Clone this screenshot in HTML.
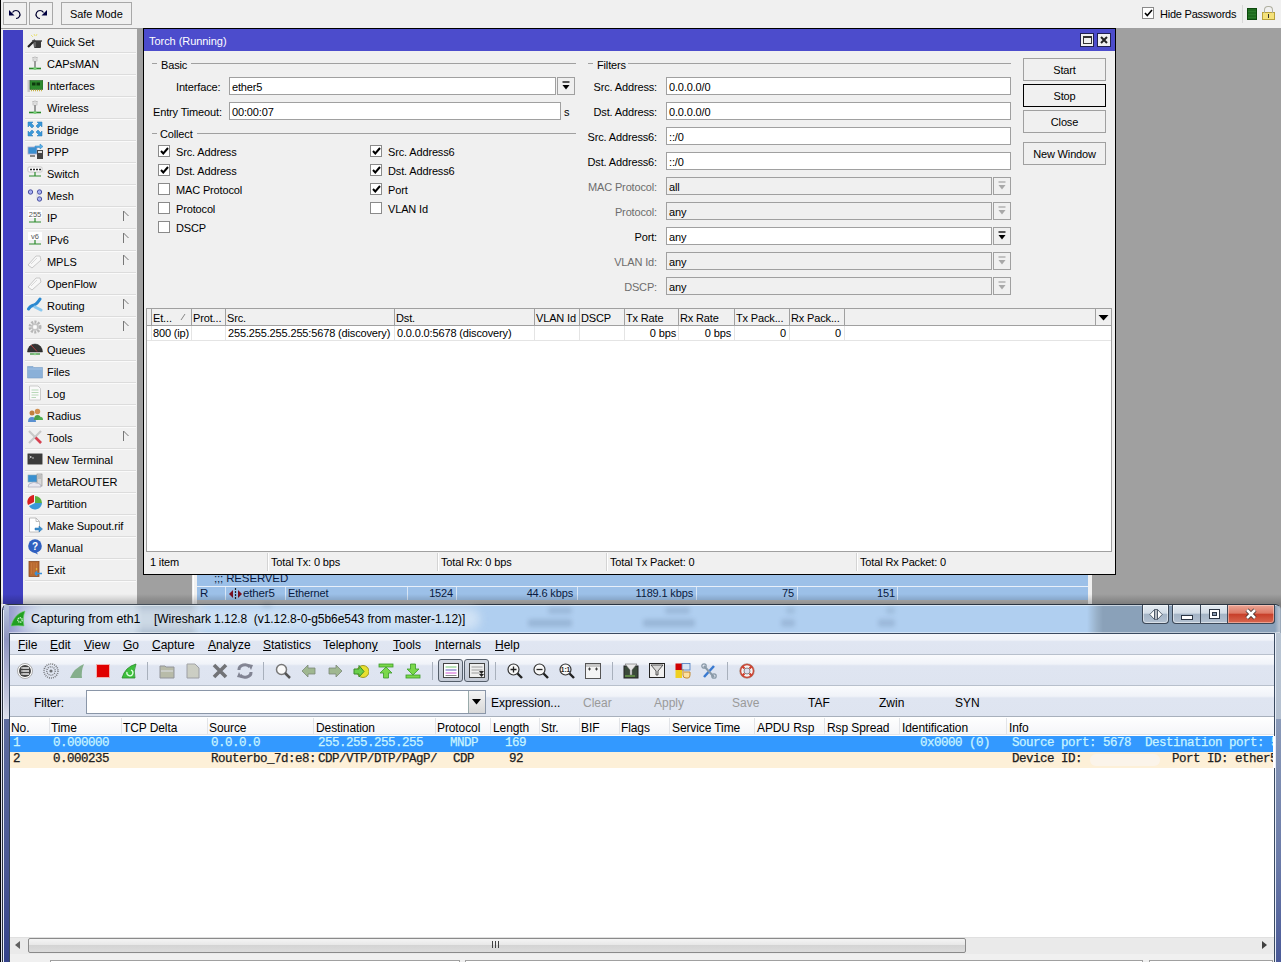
<!DOCTYPE html><html><head><meta charset="utf-8"><style>
*{margin:0;padding:0;box-sizing:border-box}
html,body{width:1281px;height:962px;overflow:hidden}
body{position:relative;background:#f0f0f0;font-family:"Liberation Sans",sans-serif;font-size:11px;color:#000}
.t{position:absolute;white-space:nowrap;line-height:13px;letter-spacing:-0.15px}
.m{font-family:"Liberation Mono",monospace}
div{position:absolute}
</style></head><body>
<div style="position:absolute;left:0px;top:0px;width:1px;height:962px;background:#000"></div>
<div style="position:absolute;left:3px;top:2px;width:24px;height:23px;background:#f0f0f0;border:1px solid #a8a8a8"></div>
<div style="position:absolute;left:29px;top:2px;width:24px;height:23px;background:#f0f0f0;border:1px solid #a8a8a8"></div>
<div style="position:absolute;left:61px;top:2px;width:71px;height:23px;background:#f0f0f0;border:1px solid #a8a8a8"></div>
<svg style="position:absolute;left:8px;top:8px" width="14" height="12" viewBox="0 0 14 12"><path d="M4.5 4.5 A4 4 0 1 1 8 10.5" fill="none" stroke="#000030" stroke-width="1.2"/><path d="M1 2 L1 7.5 L6.5 7.5 Z" fill="#000040"/></svg>
<svg style="position:absolute;left:34px;top:8px" width="14" height="12" viewBox="0 0 14 12"><path d="M9.5 4.5 A4 4 0 1 0 6 10.5" fill="none" stroke="#000030" stroke-width="1.2"/><path d="M13 2 L13 7.5 L7.5 7.5 Z" fill="#000040"/></svg>
<div class="t" style="left:70px;top:8px;font-size:11px;letter-spacing:-0.05px">Safe Mode</div>
<div style="position:absolute;left:1142px;top:7px;width:12px;height:12px;background:#fff;border:1px solid #8a8a8a"></div>
<svg style="position:absolute;left:1144px;top:9px" width="9" height="8" viewBox="0 0 9 8"><path d="M1 4 L3.3 6.5 L8 1" fill="none" stroke="#000" stroke-width="1.6"/></svg>
<div class="t" style="left:1160px;top:8px;font-size:11px;letter-spacing:-0.23px">Hide Passwords</div>
<div style="position:absolute;left:1242px;top:5px;width:1px;height:18px;background:#d8d8d8"></div>
<div style="position:absolute;left:1247px;top:8px;width:10px;height:12px;background:repeating-linear-gradient(#1f6b1f 0 2px,#2a7a2a 2px 3px);border:1px solid #0d4a0d"></div>
<div style="position:absolute;left:1262px;top:12px;width:13px;height:8px;background:#f5e27a;border:1px solid #b9a23a"></div>
<div style="position:absolute;left:1268px;top:14px;width:1px;height:4px;background:#333"></div>
<div style="position:absolute;left:1264px;top:6px;width:9px;height:7px;border:1.5px solid #b0b0a0;border-bottom:none;border-radius:4px 4px 0 0"></div>
<div style="position:absolute;left:1px;top:28px;width:1280px;height:1px;background:#a0a0a0"></div>
<div style="position:absolute;left:1px;top:29px;width:2px;height:575px;background:#f0f0f0"></div>
<div style="position:absolute;left:3px;top:30px;width:20px;height:574px;background:#4140c2"></div>
<div style="position:absolute;left:23px;top:29px;width:114px;height:575px;background:#f0f0f0"></div>
<div class="t" style="left:47px;top:36px;font-size:11px;letter-spacing:-0.05px">Quick Set</div>
<div style="position:absolute;left:25px;top:52px;width:111px;height:1px;background:#dcdcdc"></div>
<div style="position:absolute;left:25px;top:53px;width:111px;height:1px;background:#fafafa"></div>
<div class="t" style="left:47px;top:58px;font-size:11px;letter-spacing:-0.05px">CAPsMAN</div>
<div style="position:absolute;left:25px;top:74px;width:111px;height:1px;background:#dcdcdc"></div>
<div style="position:absolute;left:25px;top:75px;width:111px;height:1px;background:#fafafa"></div>
<div class="t" style="left:47px;top:80px;font-size:11px;letter-spacing:-0.05px">Interfaces</div>
<div style="position:absolute;left:25px;top:96px;width:111px;height:1px;background:#dcdcdc"></div>
<div style="position:absolute;left:25px;top:97px;width:111px;height:1px;background:#fafafa"></div>
<div class="t" style="left:47px;top:102px;font-size:11px;letter-spacing:-0.05px">Wireless</div>
<div style="position:absolute;left:25px;top:118px;width:111px;height:1px;background:#dcdcdc"></div>
<div style="position:absolute;left:25px;top:119px;width:111px;height:1px;background:#fafafa"></div>
<div class="t" style="left:47px;top:124px;font-size:11px;letter-spacing:-0.05px">Bridge</div>
<div style="position:absolute;left:25px;top:140px;width:111px;height:1px;background:#dcdcdc"></div>
<div style="position:absolute;left:25px;top:141px;width:111px;height:1px;background:#fafafa"></div>
<div class="t" style="left:47px;top:146px;font-size:11px;letter-spacing:-0.05px">PPP</div>
<div style="position:absolute;left:25px;top:162px;width:111px;height:1px;background:#dcdcdc"></div>
<div style="position:absolute;left:25px;top:163px;width:111px;height:1px;background:#fafafa"></div>
<div class="t" style="left:47px;top:168px;font-size:11px;letter-spacing:-0.05px">Switch</div>
<div style="position:absolute;left:25px;top:184px;width:111px;height:1px;background:#dcdcdc"></div>
<div style="position:absolute;left:25px;top:185px;width:111px;height:1px;background:#fafafa"></div>
<div class="t" style="left:47px;top:190px;font-size:11px;letter-spacing:-0.05px">Mesh</div>
<div style="position:absolute;left:25px;top:206px;width:111px;height:1px;background:#dcdcdc"></div>
<div style="position:absolute;left:25px;top:207px;width:111px;height:1px;background:#fafafa"></div>
<div class="t" style="left:47px;top:212px;font-size:11px;letter-spacing:-0.05px">IP</div>
<div style="position:absolute;left:25px;top:228px;width:111px;height:1px;background:#dcdcdc"></div>
<div style="position:absolute;left:25px;top:229px;width:111px;height:1px;background:#fafafa"></div>
<svg style="position:absolute;left:122px;top:210px" width="8" height="12" viewBox="0 0 8 12"><path d="M1.5 1 L1.5 11 M1.5 1 L6.5 6" fill="none" stroke="#777" stroke-width="1"/></svg>
<div class="t" style="left:47px;top:234px;font-size:11px;letter-spacing:-0.05px">IPv6</div>
<div style="position:absolute;left:25px;top:250px;width:111px;height:1px;background:#dcdcdc"></div>
<div style="position:absolute;left:25px;top:251px;width:111px;height:1px;background:#fafafa"></div>
<svg style="position:absolute;left:122px;top:232px" width="8" height="12" viewBox="0 0 8 12"><path d="M1.5 1 L1.5 11 M1.5 1 L6.5 6" fill="none" stroke="#777" stroke-width="1"/></svg>
<div class="t" style="left:47px;top:256px;font-size:11px;letter-spacing:-0.05px">MPLS</div>
<div style="position:absolute;left:25px;top:272px;width:111px;height:1px;background:#dcdcdc"></div>
<div style="position:absolute;left:25px;top:273px;width:111px;height:1px;background:#fafafa"></div>
<svg style="position:absolute;left:122px;top:254px" width="8" height="12" viewBox="0 0 8 12"><path d="M1.5 1 L1.5 11 M1.5 1 L6.5 6" fill="none" stroke="#777" stroke-width="1"/></svg>
<div class="t" style="left:47px;top:278px;font-size:11px;letter-spacing:-0.05px">OpenFlow</div>
<div style="position:absolute;left:25px;top:294px;width:111px;height:1px;background:#dcdcdc"></div>
<div style="position:absolute;left:25px;top:295px;width:111px;height:1px;background:#fafafa"></div>
<div class="t" style="left:47px;top:300px;font-size:11px;letter-spacing:-0.05px">Routing</div>
<div style="position:absolute;left:25px;top:316px;width:111px;height:1px;background:#dcdcdc"></div>
<div style="position:absolute;left:25px;top:317px;width:111px;height:1px;background:#fafafa"></div>
<svg style="position:absolute;left:122px;top:298px" width="8" height="12" viewBox="0 0 8 12"><path d="M1.5 1 L1.5 11 M1.5 1 L6.5 6" fill="none" stroke="#777" stroke-width="1"/></svg>
<div class="t" style="left:47px;top:322px;font-size:11px;letter-spacing:-0.05px">System</div>
<div style="position:absolute;left:25px;top:338px;width:111px;height:1px;background:#dcdcdc"></div>
<div style="position:absolute;left:25px;top:339px;width:111px;height:1px;background:#fafafa"></div>
<svg style="position:absolute;left:122px;top:320px" width="8" height="12" viewBox="0 0 8 12"><path d="M1.5 1 L1.5 11 M1.5 1 L6.5 6" fill="none" stroke="#777" stroke-width="1"/></svg>
<div class="t" style="left:47px;top:344px;font-size:11px;letter-spacing:-0.05px">Queues</div>
<div style="position:absolute;left:25px;top:360px;width:111px;height:1px;background:#dcdcdc"></div>
<div style="position:absolute;left:25px;top:361px;width:111px;height:1px;background:#fafafa"></div>
<div class="t" style="left:47px;top:366px;font-size:11px;letter-spacing:-0.05px">Files</div>
<div style="position:absolute;left:25px;top:382px;width:111px;height:1px;background:#dcdcdc"></div>
<div style="position:absolute;left:25px;top:383px;width:111px;height:1px;background:#fafafa"></div>
<div class="t" style="left:47px;top:388px;font-size:11px;letter-spacing:-0.05px">Log</div>
<div style="position:absolute;left:25px;top:404px;width:111px;height:1px;background:#dcdcdc"></div>
<div style="position:absolute;left:25px;top:405px;width:111px;height:1px;background:#fafafa"></div>
<div class="t" style="left:47px;top:410px;font-size:11px;letter-spacing:-0.05px">Radius</div>
<div style="position:absolute;left:25px;top:426px;width:111px;height:1px;background:#dcdcdc"></div>
<div style="position:absolute;left:25px;top:427px;width:111px;height:1px;background:#fafafa"></div>
<div class="t" style="left:47px;top:432px;font-size:11px;letter-spacing:-0.05px">Tools</div>
<div style="position:absolute;left:25px;top:448px;width:111px;height:1px;background:#dcdcdc"></div>
<div style="position:absolute;left:25px;top:449px;width:111px;height:1px;background:#fafafa"></div>
<svg style="position:absolute;left:122px;top:430px" width="8" height="12" viewBox="0 0 8 12"><path d="M1.5 1 L1.5 11 M1.5 1 L6.5 6" fill="none" stroke="#777" stroke-width="1"/></svg>
<div class="t" style="left:47px;top:454px;font-size:11px;letter-spacing:-0.05px">New Terminal</div>
<div style="position:absolute;left:25px;top:470px;width:111px;height:1px;background:#dcdcdc"></div>
<div style="position:absolute;left:25px;top:471px;width:111px;height:1px;background:#fafafa"></div>
<div class="t" style="left:47px;top:476px;font-size:11px;letter-spacing:-0.05px">MetaROUTER</div>
<div style="position:absolute;left:25px;top:492px;width:111px;height:1px;background:#dcdcdc"></div>
<div style="position:absolute;left:25px;top:493px;width:111px;height:1px;background:#fafafa"></div>
<div class="t" style="left:47px;top:498px;font-size:11px;letter-spacing:-0.05px">Partition</div>
<div style="position:absolute;left:25px;top:514px;width:111px;height:1px;background:#dcdcdc"></div>
<div style="position:absolute;left:25px;top:515px;width:111px;height:1px;background:#fafafa"></div>
<div class="t" style="left:47px;top:520px;font-size:11px;letter-spacing:-0.05px">Make Supout.rif</div>
<div style="position:absolute;left:25px;top:536px;width:111px;height:1px;background:#dcdcdc"></div>
<div style="position:absolute;left:25px;top:537px;width:111px;height:1px;background:#fafafa"></div>
<div class="t" style="left:47px;top:542px;font-size:11px;letter-spacing:-0.05px">Manual</div>
<div style="position:absolute;left:25px;top:558px;width:111px;height:1px;background:#dcdcdc"></div>
<div style="position:absolute;left:25px;top:559px;width:111px;height:1px;background:#fafafa"></div>
<div class="t" style="left:47px;top:564px;font-size:11px;letter-spacing:-0.05px">Exit</div>
<div style="position:absolute;left:25px;top:580px;width:111px;height:1px;background:#dcdcdc"></div>
<div style="position:absolute;left:25px;top:581px;width:111px;height:1px;background:#fafafa"></div>
<svg style="position:absolute;left:27px;top:33px" width="16" height="16" viewBox="0 0 16 16"><path d="M7 1 L8 3 M4 2 L6 4 M10 1 L9 3" stroke="#e8e070" stroke-width="0.9"/><path d="M1 14 L8 7" stroke="#222" stroke-width="2.2"/><path d="M5 8 H15" stroke="#555" stroke-width="1.6"/><path d="M6 8 L7 14 Q7 15 8 15 H13 Q14 15 14 14 L14 8 Z" fill="#3a3a3a"/><path d="M8 9 V14" stroke="#888" stroke-width="1"/></svg>
<svg style="position:absolute;left:27px;top:55px" width="16" height="16" viewBox="0 0 16 16"><path d="M5 3 Q8 1 11 3" fill="none" stroke="#bbb" stroke-width="1"/><rect x="6" y="4" width="4" height="2" fill="#f4f4f4" stroke="#aaa" stroke-width="0.6"/><path d="M8 6 L8 13" stroke="#9a9a9a" stroke-width="2"/><path d="M2 13.5 L14 13.5" stroke="#2a8a2a" stroke-width="1.6"/><circle cx="8" cy="13.5" r="1.5" fill="#7ad07a"/></svg>
<svg style="position:absolute;left:27px;top:99px" width="16" height="16" viewBox="0 0 16 16"><path d="M5 3 Q8 1 11 3" fill="none" stroke="#bbb" stroke-width="1"/><rect x="6" y="4" width="4" height="2" fill="#f4f4f4" stroke="#aaa" stroke-width="0.6"/><path d="M8 6 L8 13" stroke="#9a9a9a" stroke-width="2"/><path d="M2 13.5 L14 13.5" stroke="#2a8a2a" stroke-width="1.6"/><circle cx="8" cy="13.5" r="1.5" fill="#7ad07a"/></svg>
<svg style="position:absolute;left:27px;top:77px" width="16" height="16" viewBox="0 0 16 16"><rect x="0.5" y="3" width="2.5" height="12" fill="#c8c8c8"/><rect x="3" y="3.5" width="13" height="9" fill="#2e8a2e" stroke="#1e5a1e" stroke-width="0.6"/><rect x="5" y="5.5" width="3.5" height="3" fill="#0e3a0e"/><rect x="9.5" y="5.5" width="3.5" height="3" fill="#0e3a0e"/><path d="M4 13.5 H15" stroke="#c8b040" stroke-width="1.4" stroke-dasharray="1 1"/></svg>
<svg style="position:absolute;left:27px;top:121px" width="16" height="16" viewBox="0 0 16 16"><g transform=""><path d="M1 1 H6 L4.5 2.5 L7 5 L5 7 L2.5 4.5 L1 6 Z" fill="#3a98d8" stroke="#2a78b8" stroke-width="0.5"/></g><g transform="translate(16,0) scale(-1,1)"><path d="M1 1 H6 L4.5 2.5 L7 5 L5 7 L2.5 4.5 L1 6 Z" fill="#3a98d8" stroke="#2a78b8" stroke-width="0.5"/></g><g transform="translate(0,16) scale(1,-1)"><path d="M1 1 H6 L4.5 2.5 L7 5 L5 7 L2.5 4.5 L1 6 Z" fill="#3a98d8" stroke="#2a78b8" stroke-width="0.5"/></g><g transform="translate(16,16) scale(-1,-1)"><path d="M1 1 H6 L4.5 2.5 L7 5 L5 7 L2.5 4.5 L1 6 Z" fill="#3a98d8" stroke="#2a78b8" stroke-width="0.5"/></g></svg>
<svg style="position:absolute;left:27px;top:143px" width="16" height="16" viewBox="0 0 16 16"><rect x="1" y="4" width="9" height="7" fill="#3a90d0" stroke="#aac" stroke-width="0.8"/><rect x="3" y="12" width="5" height="2" fill="#888"/><rect x="10" y="7" width="6" height="9" fill="#444"/><rect x="11" y="8" width="4" height="2" fill="#ddd"/><path d="M8 3 H13 V1 L16 3.5 L13 6 V4.5 H8Z" fill="#5ab0e8" stroke="#2a80c0" stroke-width="0.5"/></svg>
<svg style="position:absolute;left:27px;top:165px" width="16" height="16" viewBox="0 0 16 16"><rect x="1" y="2" width="14" height="5" rx="1" fill="#fff" stroke="#bbb" stroke-width="0.8"/><path d="M3 4.5 H5 M6 4.5 H8 M9 4.5 H11 M12 4.5 H14" stroke="#222" stroke-width="1.5"/><path d="M8 7 V11 M2 11 H14" stroke="#2a8a2a" stroke-width="1.2"/></svg>
<svg style="position:absolute;left:27px;top:187px" width="16" height="16" viewBox="0 0 16 16"><circle cx="3.5" cy="5" r="2.2" fill="#a8b0f0" stroke="#4a50a0" stroke-width="1"/><circle cx="12.5" cy="5" r="2.2" fill="#a8b0f0" stroke="#4a50a0" stroke-width="1"/><circle cx="12.5" cy="12" r="2.2" fill="#a8b0f0" stroke="#4a50a0" stroke-width="1"/><path d="M10 5 V12" stroke="#ccc" stroke-width="0.6"/></svg>
<svg style="position:absolute;left:27px;top:209px" width="16" height="16" viewBox="0 0 16 16"><rect x="1" y="1" width="14" height="8" fill="#fff"/><text x="8" y="8" font-size="7.5" text-anchor="middle" fill="#555" font-family="Liberation Sans">255</text><path d="M8 9 L8 13 M2 13 L14 13" stroke="#2a8a2a" stroke-width="1.2"/></svg>
<svg style="position:absolute;left:27px;top:231px" width="16" height="16" viewBox="0 0 16 16"><rect x="1" y="1" width="14" height="8" fill="#fff"/><text x="8" y="8" font-size="7.5" text-anchor="middle" fill="#555" font-family="Liberation Sans">v6</text><path d="M8 9 L8 13 M2 13 L14 13" stroke="#2a8a2a" stroke-width="1.2"/></svg>
<svg style="position:absolute;left:27px;top:253px" width="16" height="16" viewBox="0 0 16 16"><path d="M1 12 L9 3 L13 3 L14 7 L5 15 Z" fill="#f8f8f8" stroke="#c8c8c8" stroke-width="1"/><path d="M4 11 L10 5" stroke="#d8d8d8"/></svg>
<svg style="position:absolute;left:27px;top:275px" width="16" height="16" viewBox="0 0 16 16"><path d="M1 12 L9 3 L13 3 L14 7 L5 15 Z" fill="#f8f8f8" stroke="#c8c8c8" stroke-width="1"/><path d="M4 11 L10 5" stroke="#d8d8d8"/></svg>
<svg style="position:absolute;left:27px;top:297px" width="16" height="16" viewBox="0 0 16 16"><path d="M1.5 12 Q3 9 7 8 Q10 7 13 2" stroke="#2a88d0" stroke-width="3" fill="none" stroke-linecap="round"/><path d="M8 10 L14 13" stroke="#8ac8f0" stroke-width="3" stroke-linecap="round"/></svg>
<svg style="position:absolute;left:27px;top:319px" width="16" height="16" viewBox="0 0 16 16"><g opacity="0.8"><circle cx="8" cy="8" r="5" fill="none" stroke="#a8a8a8" stroke-width="3" stroke-dasharray="2 1.2"/><circle cx="8" cy="8" r="3" fill="none" stroke="#b8b8b8" stroke-width="1.5"/><circle cx="8" cy="8" r="1.3" fill="#fff"/></g></svg>
<svg style="position:absolute;left:27px;top:341px" width="16" height="16" viewBox="0 0 16 16"><path d="M0.5 11 A7.5 8 0 0 1 15.5 11 Z" fill="#333" stroke="#222" stroke-width="0.5"/><path d="M4 4 L10 10.5" stroke="#c04040" stroke-width="0.9"/><path d="M3 13 H13" stroke="#2a8a2a" stroke-width="1.2"/><circle cx="8" cy="13" r="1.3" fill="#8ad08a"/></svg>
<svg style="position:absolute;left:27px;top:363px" width="16" height="16" viewBox="0 0 16 16"><path d="M0.5 3.5 H6 L7 4.5 H15.5 V15 H0.5 Z" fill="#8ab0d8" stroke="#7aa0c8" stroke-width="0.6"/><path d="M0.5 6 H15.5" stroke="#a8c8e8" stroke-width="0.8"/></svg>
<svg style="position:absolute;left:27px;top:385px" width="16" height="16" viewBox="0 0 16 16"><path d="M2.5 1 H11 L13.5 3.5 V15 H2.5 Z" fill="#fafafa" stroke="#c0c0c0" stroke-width="0.8"/><path d="M4.5 5 H11.5 M4.5 7.5 H11.5 M4.5 10 H11.5 M4.5 12.5 H9" stroke="#b8d8b8" stroke-width="1"/></svg>
<svg style="position:absolute;left:27px;top:407px" width="16" height="16" viewBox="0 0 16 16"><circle cx="5" cy="6" r="2.5" fill="#c08040"/><circle cx="10.5" cy="4.5" r="2.7" fill="#d09050"/><path d="M1 15 Q1 10 5 10 Q9 10 9 15Z" fill="#5a90d0"/><path d="M7 13 Q7 8 10.5 8 Q14 8 14 13Z" fill="#4aa04a"/><path d="M11 13 Q11 10 14 10 Q16 10 16 13Z" fill="#50b050"/></svg>
<svg style="position:absolute;left:27px;top:429px" width="16" height="16" viewBox="0 0 16 16"><path d="M2 2 L14 14" stroke="#c8c8c8" stroke-width="2.2"/><path d="M14 2 L2 14" stroke="#c8c8c8" stroke-width="2.2"/><path d="M8.5 8.5 L14 14" stroke="#d84050" stroke-width="2.6"/></svg>
<svg style="position:absolute;left:27px;top:451px" width="16" height="16" viewBox="0 0 16 16"><rect x="0.5" y="2.5" width="15" height="11" rx="1" fill="#3a3a3a" stroke="#999" stroke-width="1"/><path d="M2.5 5 L4.5 6 L2.5 7" stroke="#ddd" stroke-width="0.8" fill="none"/><path d="M5 7 H7" stroke="#ddd" stroke-width="0.8"/></svg>
<svg style="position:absolute;left:27px;top:473px" width="16" height="16" viewBox="0 0 16 16"><rect x="1" y="2" width="9" height="7" fill="#3a90d0" stroke="#8ab" stroke-width="0.6"/><rect x="10" y="1" width="5" height="12" fill="#d8d8d8" stroke="#888" stroke-width="0.6"/><path d="M11 3 H14 M11 5 H14" stroke="#888" stroke-width="0.6"/><path d="M1 14 Q1 10 5 10 Q7 8 9 10 Q14 10 14 14Z" fill="#e8e8f0" stroke="#9a9ab0" stroke-width="0.6"/></svg>
<svg style="position:absolute;left:27px;top:495px" width="16" height="16" viewBox="0 0 16 16"><path d="M8 8 L8 1 A7 7 0 0 1 15 8 Z" fill="#5ab040"/><path d="M8 8 L15 8 A7 7 0 0 1 2 11 Z" fill="#3a98d8"/><path d="M7 7 L1 10 A7 7 0 0 1 7 0 Z" fill="#d82020"/></svg>
<svg style="position:absolute;left:27px;top:517px" width="16" height="16" viewBox="0 0 16 16"><path d="M2.5 1 H9 L12.5 4.5 V15 H2.5 Z" fill="#fff" stroke="#b0b0b0" stroke-width="0.8"/><path d="M9 1 V4.5 H12.5" fill="none" stroke="#b0b0b0" stroke-width="0.8"/><path d="M8 11 H12 V9 L15.5 12 L12 15 V13 H8Z" fill="#3a90d0" stroke="#2a70b0" stroke-width="0.5"/></svg>
<svg style="position:absolute;left:27px;top:539px" width="16" height="16" viewBox="0 0 16 16"><circle cx="8" cy="7" r="6.8" fill="#3060c0"/><path d="M9 12 L11 15.5 L6 13Z" fill="#3060c0"/><text x="8" y="11" font-size="10" font-weight="bold" text-anchor="middle" fill="#fff" font-family="Liberation Sans">?</text></svg>
<svg style="position:absolute;left:27px;top:561px" width="16" height="16" viewBox="0 0 16 16"><rect x="2" y="0.5" width="10" height="15" fill="#b86a30" stroke="#8a4a20" stroke-width="0.8"/><path d="M4.5 2 V13 M7 2 V13 M9.5 2 V13" stroke="#c87a40" stroke-width="0.8"/><circle cx="9.5" cy="8" r="0.8" fill="#f0d040"/><path d="M8 12.5 H15 M8 12.5 L10 10.5 M8 12.5 L10 14.5" stroke="#3a90d8" stroke-width="1.6"/></svg>
<div style="position:absolute;left:137px;top:29px;width:1144px;height:575px;background:#a0a0a0"></div>
<div style="position:absolute;left:192px;top:560px;width:900px;height:44px;background:#f0f0f0"></div>
<div style="position:absolute;left:193px;top:560px;width:1px;height:44px;background:#fff"></div>
<div style="position:absolute;left:197px;top:560px;width:891px;height:44px;background:#9cc0e8"></div>
<div style="position:absolute;left:197px;top:586px;width:891px;height:1px;background:#e8f0fa"></div>
<div style="position:absolute;left:197px;top:600px;width:891px;height:4px;background:#b8b8b8"></div>
<div class="t" style="left:214px;top:572px;color:#0a1a40;font-size:11.5px">;;; RESERVED</div>
<div class="t" style="left:200px;top:587px;color:#0a1a40;font-size:11.5px">R</div>
<div style="position:absolute;left:225px;top:587px;width:1px;height:13px;background:#d8e6f6"></div>
<div style="position:absolute;left:285px;top:587px;width:1px;height:13px;background:#d8e6f6"></div>
<div style="position:absolute;left:407px;top:587px;width:1px;height:13px;background:#d8e6f6"></div>
<div style="position:absolute;left:456px;top:587px;width:1px;height:13px;background:#d8e6f6"></div>
<div style="position:absolute;left:577px;top:587px;width:1px;height:13px;background:#d8e6f6"></div>
<div style="position:absolute;left:696px;top:587px;width:1px;height:13px;background:#d8e6f6"></div>
<div style="position:absolute;left:797px;top:587px;width:1px;height:13px;background:#d8e6f6"></div>
<div style="position:absolute;left:897px;top:587px;width:1px;height:13px;background:#d8e6f6"></div>
<div class="t" style="left:243px;top:587px;color:#0a1a40;font-size:11.5px">ether5</div>
<div class="t" style="left:288px;top:587px;color:#0a1a40">Ethernet</div>
<div class="t" style="right:828px;top:587px;color:#0a1a40">1524</div>
<div class="t" style="right:708px;top:587px;color:#0a1a40">44.6 kbps</div>
<div class="t" style="right:588px;top:587px;color:#0a1a40">1189.1 kbps</div>
<div class="t" style="right:487px;top:587px;color:#0a1a40">75</div>
<div class="t" style="right:386px;top:587px;color:#0a1a40">151</div>
<svg style="position:absolute;left:229px;top:588px" width="13" height="12" viewBox="0 0 13 12"><path d="M0 6 L4 2 L4 10Z M13 6 L9 2 L9 10Z" fill="#7a1020"/><path d="M6.5 0 L6.5 12" stroke="#222" stroke-width="1.2" stroke-dasharray="2 1"/></svg>
<div style="position:absolute;left:143px;top:28px;width:973px;height:547px;background:#f0f0f0;border:1px solid #000"></div>
<div style="position:absolute;left:144px;top:29px;width:971px;height:22px;background:#4c4ccc"></div>
<div class="t" style="left:149px;top:35px;color:#fff;font-size:11px;letter-spacing:-0.05px">Torch (Running)</div>
<div style="position:absolute;left:1080px;top:33px;width:14px;height:14px;background:#f0f0f0;border:1px solid #202050"></div>
<div style="position:absolute;left:1083px;top:36px;width:9px;height:8px;border:1px solid #333;border-top-width:2px"></div>
<div style="position:absolute;left:1097px;top:33px;width:14px;height:14px;background:#f0f0f0;border:1px solid #202050"></div>
<svg style="position:absolute;left:1099px;top:35px" width="10" height="10" viewBox="0 0 10 10"><path d="M2 2 L8 8 M8 2 L2 8" stroke="#222" stroke-width="2"/></svg>
<div style="position:absolute;left:152px;top:63px;width:5px;height:1px;background:#a0a0a0"></div>
<div class="t" style="left:161px;top:59px;">Basic</div>
<div style="position:absolute;left:191px;top:63px;width:385px;height:1px;background:#a0a0a0"></div>
<div class="t" style="left:176px;top:81px;">Interface:</div>
<div style="position:absolute;left:229px;top:77px;width:327px;height:18px;background:#fff;border:1px solid #a0a0a0"></div>
<div class="t" style="left:232px;top:81px;">ether5</div>
<div style="position:absolute;left:557px;top:77px;width:18px;height:18px;background:#f0f0f0;border:1px solid #a0a0a0"></div>
<svg style="position:absolute;left:561px;top:81px" width="10" height="10" viewBox="0 0 10 10"><path d="M1.5 1 L8.5 1" stroke="#000" stroke-width="1.3"/><path d="M1.5 4 L8.5 4 L5 8.5Z" fill="#000"/></svg>
<div class="t" style="left:153px;top:106px;">Entry Timeout:</div>
<div style="position:absolute;left:229px;top:102px;width:332px;height:18px;background:#fff;border:1px solid #a0a0a0"></div>
<div class="t" style="left:232px;top:106px;">00:00:07</div>
<div class="t" style="left:564px;top:106px;">s</div>
<div style="position:absolute;left:152px;top:133px;width:5px;height:1px;background:#a0a0a0"></div>
<div class="t" style="left:160px;top:128px;">Collect</div>
<div style="position:absolute;left:197px;top:133px;width:379px;height:1px;background:#a0a0a0"></div>
<div style="position:absolute;left:158px;top:145px;width:12px;height:12px;background:#fff;border:1px solid #8a8a8a"></div>
<svg style="position:absolute;left:160px;top:147px" width="9" height="8" viewBox="0 0 9 8"><path d="M1 4 L3.3 6.5 L8 1" fill="none" stroke="#000" stroke-width="2"/></svg>
<div class="t" style="left:176px;top:146px;">Src. Address</div>
<div style="position:absolute;left:158px;top:164px;width:12px;height:12px;background:#fff;border:1px solid #8a8a8a"></div>
<svg style="position:absolute;left:160px;top:166px" width="9" height="8" viewBox="0 0 9 8"><path d="M1 4 L3.3 6.5 L8 1" fill="none" stroke="#000" stroke-width="2"/></svg>
<div class="t" style="left:176px;top:165px;">Dst. Address</div>
<div style="position:absolute;left:158px;top:183px;width:12px;height:12px;background:#fff;border:1px solid #8a8a8a"></div>
<div class="t" style="left:176px;top:184px;">MAC Protocol</div>
<div style="position:absolute;left:158px;top:202px;width:12px;height:12px;background:#fff;border:1px solid #8a8a8a"></div>
<div class="t" style="left:176px;top:203px;">Protocol</div>
<div style="position:absolute;left:158px;top:221px;width:12px;height:12px;background:#fff;border:1px solid #8a8a8a"></div>
<div class="t" style="left:176px;top:222px;">DSCP</div>
<div style="position:absolute;left:370px;top:145px;width:12px;height:12px;background:#fff;border:1px solid #8a8a8a"></div>
<svg style="position:absolute;left:372px;top:147px" width="9" height="8" viewBox="0 0 9 8"><path d="M1 4 L3.3 6.5 L8 1" fill="none" stroke="#000" stroke-width="2"/></svg>
<div class="t" style="left:388px;top:146px;">Src. Address6</div>
<div style="position:absolute;left:370px;top:164px;width:12px;height:12px;background:#fff;border:1px solid #8a8a8a"></div>
<svg style="position:absolute;left:372px;top:166px" width="9" height="8" viewBox="0 0 9 8"><path d="M1 4 L3.3 6.5 L8 1" fill="none" stroke="#000" stroke-width="2"/></svg>
<div class="t" style="left:388px;top:165px;">Dst. Address6</div>
<div style="position:absolute;left:370px;top:183px;width:12px;height:12px;background:#fff;border:1px solid #8a8a8a"></div>
<svg style="position:absolute;left:372px;top:185px" width="9" height="8" viewBox="0 0 9 8"><path d="M1 4 L3.3 6.5 L8 1" fill="none" stroke="#000" stroke-width="2"/></svg>
<div class="t" style="left:388px;top:184px;">Port</div>
<div style="position:absolute;left:370px;top:202px;width:12px;height:12px;background:#fff;border:1px solid #8a8a8a"></div>
<div class="t" style="left:388px;top:203px;">VLAN Id</div>
<div style="position:absolute;left:588px;top:63px;width:5px;height:1px;background:#a0a0a0"></div>
<div class="t" style="left:597px;top:59px;">Filters</div>
<div style="position:absolute;left:628px;top:63px;width:383px;height:1px;background:#a0a0a0"></div>
<div class="t" style="right:624px;top:81px;color:#000">Src. Address:</div>
<div style="position:absolute;left:666px;top:77px;width:345px;height:18px;background:#fff;border:1px solid #a0a0a0"></div>
<div class="t" style="left:669px;top:81px;">0.0.0.0/0</div>
<div class="t" style="right:624px;top:106px;color:#000">Dst. Address:</div>
<div style="position:absolute;left:666px;top:102px;width:345px;height:18px;background:#fff;border:1px solid #a0a0a0"></div>
<div class="t" style="left:669px;top:106px;">0.0.0.0/0</div>
<div class="t" style="right:624px;top:131px;color:#000">Src. Address6:</div>
<div style="position:absolute;left:666px;top:127px;width:345px;height:18px;background:#fff;border:1px solid #a0a0a0"></div>
<div class="t" style="left:669px;top:131px;">::/0</div>
<div class="t" style="right:624px;top:156px;color:#000">Dst. Address6:</div>
<div style="position:absolute;left:666px;top:152px;width:345px;height:18px;background:#fff;border:1px solid #a0a0a0"></div>
<div class="t" style="left:669px;top:156px;">::/0</div>
<div class="t" style="right:624px;top:181px;color:#6d6d6d">MAC Protocol:</div>
<div style="position:absolute;left:666px;top:177px;width:326px;height:18px;background:#f0f0f0;border:1px solid #a0a0a0"></div>
<div class="t" style="left:669px;top:181px;">all</div>
<div style="position:absolute;left:993px;top:177px;width:18px;height:18px;background:#f0f0f0;border:1px solid #a0a0a0"></div>
<svg style="position:absolute;left:997px;top:181px" width="10" height="10" viewBox="0 0 10 10"><path d="M1.5 1 L8.5 1" stroke="#a8a8a8" stroke-width="1.3"/><path d="M1.5 4 L8.5 4 L5 8.5Z" fill="#a8a8a8"/></svg>
<div class="t" style="right:624px;top:206px;color:#6d6d6d">Protocol:</div>
<div style="position:absolute;left:666px;top:202px;width:326px;height:18px;background:#f0f0f0;border:1px solid #a0a0a0"></div>
<div class="t" style="left:669px;top:206px;">any</div>
<div style="position:absolute;left:993px;top:202px;width:18px;height:18px;background:#f0f0f0;border:1px solid #a0a0a0"></div>
<svg style="position:absolute;left:997px;top:206px" width="10" height="10" viewBox="0 0 10 10"><path d="M1.5 1 L8.5 1" stroke="#a8a8a8" stroke-width="1.3"/><path d="M1.5 4 L8.5 4 L5 8.5Z" fill="#a8a8a8"/></svg>
<div class="t" style="right:624px;top:231px;color:#000">Port:</div>
<div style="position:absolute;left:666px;top:227px;width:326px;height:18px;background:#fff;border:1px solid #a0a0a0"></div>
<div class="t" style="left:669px;top:231px;">any</div>
<div style="position:absolute;left:993px;top:227px;width:18px;height:18px;background:#f0f0f0;border:1px solid #a0a0a0"></div>
<svg style="position:absolute;left:997px;top:231px" width="10" height="10" viewBox="0 0 10 10"><path d="M1.5 1 L8.5 1" stroke="#000" stroke-width="1.3"/><path d="M1.5 4 L8.5 4 L5 8.5Z" fill="#000"/></svg>
<div class="t" style="right:624px;top:256px;color:#6d6d6d">VLAN Id:</div>
<div style="position:absolute;left:666px;top:252px;width:326px;height:18px;background:#f0f0f0;border:1px solid #a0a0a0"></div>
<div class="t" style="left:669px;top:256px;">any</div>
<div style="position:absolute;left:993px;top:252px;width:18px;height:18px;background:#f0f0f0;border:1px solid #a0a0a0"></div>
<svg style="position:absolute;left:997px;top:256px" width="10" height="10" viewBox="0 0 10 10"><path d="M1.5 1 L8.5 1" stroke="#a8a8a8" stroke-width="1.3"/><path d="M1.5 4 L8.5 4 L5 8.5Z" fill="#a8a8a8"/></svg>
<div class="t" style="right:624px;top:281px;color:#6d6d6d">DSCP:</div>
<div style="position:absolute;left:666px;top:277px;width:326px;height:18px;background:#f0f0f0;border:1px solid #a0a0a0"></div>
<div class="t" style="left:669px;top:281px;">any</div>
<div style="position:absolute;left:993px;top:277px;width:18px;height:18px;background:#f0f0f0;border:1px solid #a0a0a0"></div>
<svg style="position:absolute;left:997px;top:281px" width="10" height="10" viewBox="0 0 10 10"><path d="M1.5 1 L8.5 1" stroke="#a8a8a8" stroke-width="1.3"/><path d="M1.5 4 L8.5 4 L5 8.5Z" fill="#a8a8a8"/></svg>
<div style="position:absolute;left:1023px;top:58px;width:83px;height:23px;background:#f0f0f0;border:1px solid #a0a0a0"></div>
<div class="t" style="left:1023px;width:83px;text-align:center;top:64px">Start</div>
<div style="position:absolute;left:1023px;top:84px;width:83px;height:23px;background:#f0f0f0;border:1px solid #000"></div>
<div class="t" style="left:1023px;width:83px;text-align:center;top:90px">Stop</div>
<div style="position:absolute;left:1023px;top:110px;width:83px;height:23px;background:#f0f0f0;border:1px solid #a0a0a0"></div>
<div class="t" style="left:1023px;width:83px;text-align:center;top:116px">Close</div>
<div style="position:absolute;left:1023px;top:142px;width:83px;height:23px;background:#f0f0f0;border:1px solid #a0a0a0"></div>
<div class="t" style="left:1023px;width:83px;text-align:center;top:148px">New Window</div>
<div style="position:absolute;left:146px;top:308px;width:966px;height:244px;background:#fff;border:1px solid #a0a0a0"></div>
<div style="position:absolute;left:147px;top:309px;width:964px;height:16px;background:#f0f0f0"></div>
<div style="position:absolute;left:147px;top:325px;width:964px;height:1px;background:#a0a0a0"></div>
<div style="position:absolute;left:151px;top:309px;width:1px;height:16px;background:#a0a0a0"></div>
<div style="position:absolute;left:151px;top:326px;width:1px;height:14px;background:#e4e4e4"></div>
<div style="position:absolute;left:191px;top:309px;width:1px;height:16px;background:#a0a0a0"></div>
<div style="position:absolute;left:191px;top:326px;width:1px;height:14px;background:#e4e4e4"></div>
<div class="t" style="left:153px;top:312px;">Et...</div>
<div style="position:absolute;left:225px;top:309px;width:1px;height:16px;background:#a0a0a0"></div>
<div style="position:absolute;left:225px;top:326px;width:1px;height:14px;background:#e4e4e4"></div>
<div class="t" style="left:193px;top:312px;">Prot...</div>
<div style="position:absolute;left:394px;top:309px;width:1px;height:16px;background:#a0a0a0"></div>
<div style="position:absolute;left:394px;top:326px;width:1px;height:14px;background:#e4e4e4"></div>
<div class="t" style="left:227px;top:312px;">Src.</div>
<div style="position:absolute;left:534px;top:309px;width:1px;height:16px;background:#a0a0a0"></div>
<div style="position:absolute;left:534px;top:326px;width:1px;height:14px;background:#e4e4e4"></div>
<div class="t" style="left:396px;top:312px;">Dst.</div>
<div style="position:absolute;left:579px;top:309px;width:1px;height:16px;background:#a0a0a0"></div>
<div style="position:absolute;left:579px;top:326px;width:1px;height:14px;background:#e4e4e4"></div>
<div class="t" style="left:536px;top:312px;">VLAN Id</div>
<div style="position:absolute;left:624px;top:309px;width:1px;height:16px;background:#a0a0a0"></div>
<div style="position:absolute;left:624px;top:326px;width:1px;height:14px;background:#e4e4e4"></div>
<div class="t" style="left:581px;top:312px;">DSCP</div>
<div style="position:absolute;left:678px;top:309px;width:1px;height:16px;background:#a0a0a0"></div>
<div style="position:absolute;left:678px;top:326px;width:1px;height:14px;background:#e4e4e4"></div>
<div class="t" style="left:626px;top:312px;">Tx Rate</div>
<div style="position:absolute;left:734px;top:309px;width:1px;height:16px;background:#a0a0a0"></div>
<div style="position:absolute;left:734px;top:326px;width:1px;height:14px;background:#e4e4e4"></div>
<div class="t" style="left:680px;top:312px;">Rx Rate</div>
<div style="position:absolute;left:789px;top:309px;width:1px;height:16px;background:#a0a0a0"></div>
<div style="position:absolute;left:789px;top:326px;width:1px;height:14px;background:#e4e4e4"></div>
<div class="t" style="left:736px;top:312px;">Tx Pack...</div>
<div style="position:absolute;left:844px;top:309px;width:1px;height:16px;background:#a0a0a0"></div>
<div style="position:absolute;left:844px;top:326px;width:1px;height:14px;background:#e4e4e4"></div>
<div class="t" style="left:791px;top:312px;">Rx Pack...</div>
<div style="position:absolute;left:147px;top:340px;width:964px;height:1px;background:#e4e4e4"></div>
<div style="position:absolute;left:1095px;top:309px;width:1px;height:16px;background:#a0a0a0"></div>
<svg style="position:absolute;left:180px;top:313px" width="6" height="8" viewBox="0 0 6 8"><path d="M1 7 L5 1" stroke="#888" stroke-width="1"/></svg>
<svg style="position:absolute;left:1098px;top:314px" width="11" height="8" viewBox="0 0 11 8"><path d="M0.5 1 L10.5 1 L5.5 6.5Z" fill="#000"/></svg>
<div class="t" style="left:153px;top:327px;letter-spacing:-0.15px">800 (ip)</div>
<div class="t" style="left:228px;top:327px;letter-spacing:-0.15px">255.255.255.255:5678 (discovery)</div>
<div class="t" style="left:397px;top:327px;letter-spacing:-0.15px">0.0.0.0:5678 (discovery)</div>
<div class="t" style="right:605px;top:327px">0 bps</div>
<div class="t" style="right:550px;top:327px">0 bps</div>
<div class="t" style="right:495px;top:327px">0</div>
<div class="t" style="right:440px;top:327px">0</div>
<div style="position:absolute;left:147px;top:551px;width:965px;height:1px;background:#a0a0a0"></div>
<div style="position:absolute;left:267px;top:553px;width:1px;height:18px;background:#d4d4d4"></div>
<div style="position:absolute;left:268px;top:553px;width:1px;height:18px;background:#fff"></div>
<div style="position:absolute;left:437px;top:553px;width:1px;height:18px;background:#d4d4d4"></div>
<div style="position:absolute;left:438px;top:553px;width:1px;height:18px;background:#fff"></div>
<div style="position:absolute;left:606px;top:553px;width:1px;height:18px;background:#d4d4d4"></div>
<div style="position:absolute;left:607px;top:553px;width:1px;height:18px;background:#fff"></div>
<div style="position:absolute;left:856px;top:553px;width:1px;height:18px;background:#d4d4d4"></div>
<div style="position:absolute;left:857px;top:553px;width:1px;height:18px;background:#fff"></div>
<div class="t" style="left:150px;top:556px;">1 item</div>
<div class="t" style="left:271px;top:556px;">Total Tx: 0 bps</div>
<div class="t" style="left:441px;top:556px;">Total Rx: 0 bps</div>
<div class="t" style="left:610px;top:556px;">Total Tx Packet: 0</div>
<div class="t" style="left:860px;top:556px;">Total Rx Packet: 0</div>
<div style="position:absolute;left:1266px;top:604px;width:15px;height:8px;background:#7d7d7d"></div>
<div style="position:absolute;left:1px;top:604px;width:1px;height:358px;background:#dfe2ee"></div>
<div style="position:absolute;left:2px;top:604px;width:1279px;height:358px;background:#a9c2dc;border:1px solid #2a3440;border-right-color:#9aa8b8;border-radius:6px 6px 0 0"></div>
<div style="position:absolute;left:3px;top:605px;width:1277px;height:28px;border-radius:5px 5px 0 0;background:linear-gradient(90deg,#8c92c8 0px,#b0b8dc 20px,#c6d4e3 40px,#c6d4e3 130px,#a8bacd 140px,#a8bacd 188px,#bcd2ea 196px,#b0cff0 205px,#b0cff0 1084px,#98b0c8 1094px,#8aa1b9 1100px,#8aa1b9 1272px,#b4c0ce 1276px,#b4c0ce 1281px)"></div>
<div style="position:absolute;left:6px;top:605px;width:1270px;height:1px;background:rgba(255,255,255,0.55)"></div>
<div style="position:absolute;left:20px;top:608px;width:460px;height:22px;background:rgba(235,242,250,0.55);filter:blur(5px);border-radius:10px"></div>
<svg style="position:absolute;left:10px;top:610px" width="16" height="17" viewBox="0 0 16 17"><path d="M1 16 C3 9 7 3 15 1 C13 6 13 11 14 16 Q8 15 1 16Z" fill="#22a022" stroke="#6ad06a" stroke-width="0.6"/><circle cx="10" cy="10" r="2.2" fill="none" stroke="#c8f0c8" stroke-width="1.4" stroke-dasharray="1.2 0.6"/></svg>
<div class="t" style="left:31px;top:612px;font-size:12.4px;letter-spacing:0;line-height:15px;color:#000">Capturing from eth1</div>
<div class="t" style="left:154px;top:612px;font-size:12px;letter-spacing:-0.05px;line-height:15px;color:#000">[Wireshark 1.12.8&nbsp; (v1.12.8-0-g5b6e543 from master-1.12)]</div>
<div style="position:absolute;left:3px;top:632px;width:1277px;height:1px;background:rgba(255,255,255,0.45)"></div>
<div style="position:absolute;left:548px;top:607px;width:24px;height:7px;background:rgba(50,70,100,0.15);filter:blur(2px);border-radius:3px"></div>
<div style="position:absolute;left:665px;top:607px;width:25px;height:7px;background:rgba(50,70,100,0.15);filter:blur(2px);border-radius:3px"></div>
<div style="position:absolute;left:786px;top:607px;width:9px;height:7px;background:rgba(50,70,100,0.12);filter:blur(2px);border-radius:3px"></div>
<div style="position:absolute;left:886px;top:607px;width:9px;height:7px;background:rgba(50,70,100,0.12);filter:blur(2px);border-radius:3px"></div>
<div style="position:absolute;left:528px;top:619px;width:44px;height:8px;background:rgba(50,70,100,0.17);filter:blur(2px);border-radius:3px"></div>
<div style="position:absolute;left:643px;top:619px;width:52px;height:8px;background:rgba(50,70,100,0.17);filter:blur(2px);border-radius:3px"></div>
<div style="position:absolute;left:781px;top:619px;width:14px;height:8px;background:rgba(50,70,100,0.15);filter:blur(2px);border-radius:3px"></div>
<div style="position:absolute;left:878px;top:619px;width:17px;height:8px;background:rgba(50,70,100,0.15);filter:blur(2px);border-radius:3px"></div>
<div style="position:absolute;left:262px;top:603px;width:10px;height:5px;background:rgba(50,70,100,0.12);filter:blur(2px);border-radius:3px"></div>
<div style="position:absolute;left:1px;top:594px;width:1280px;height:10px;background:linear-gradient(rgba(0,0,0,0),rgba(0,0,0,0.22))"></div>
<div style="position:absolute;left:1142px;top:605px;width:27px;height:19px;background:linear-gradient(#e4ebf2 0%,#d2dce6 45%,#a4b4c6 52%,#b4c2d2 100%);border:1px solid #3c4858;border-top:none;border-radius:0 0 4px 4px;box-shadow:inset 0 0 0 1px rgba(255,255,255,0.5)"></div>
<svg style="position:absolute;left:1149px;top:609px" width="14" height="11" viewBox="0 0 14 11"><path d="M5.5 0.5 L0.8 5.5 L5.5 10.5Z M8.5 0.5 L13.2 5.5 L8.5 10.5Z" fill="#fff" stroke="#3a4656" stroke-width="0.8"/><rect x="6" y="0.5" width="2" height="10" fill="#fff" stroke="#3a4656" stroke-width="0.7"/></svg>
<div style="position:absolute;left:1172px;top:605px;width:103px;height:19px;background:linear-gradient(#e4ebf2 0%,#d2dce6 45%,#a4b4c6 52%,#b4c2d2 100%);border:1px solid #3c4858;border-top:none;border-radius:0 0 4px 4px;box-shadow:inset 0 0 0 1px rgba(255,255,255,0.5)"></div>
<div style="position:absolute;left:1200px;top:605px;width:1px;height:18px;background:#3c4858"></div>
<div style="position:absolute;left:1227px;top:605px;width:48px;height:19px;background:linear-gradient(#eba595 0%,#dd7a66 45%,#c8402a 52%,#d86850 100%);border:1px solid #3c4858;border-top:none;border-radius:0 0 4px 0;box-shadow:inset 0 0 0 1px rgba(255,220,210,0.5)"></div>
<div style="position:absolute;left:1181px;top:615px;width:12px;height:5px;background:#fff;border:1px solid #2c3644"></div>
<div style="position:absolute;left:1209px;top:609px;width:11px;height:10px;background:#fff;border:1px solid #2c3644"></div>
<div style="position:absolute;left:1212px;top:612px;width:5px;height:4px;background:#8a9ab0;border:1px solid #2c3644"></div>
<svg style="position:absolute;left:1244px;top:608px" width="14" height="12" viewBox="0 0 14 12"><path d="M3 2 L11 10 M11 2 L3 10" stroke="#3a2a28" stroke-width="4.2"/><path d="M3 2 L11 10 M11 2 L3 10" stroke="#fff" stroke-width="2.6"/></svg>
<div style="position:absolute;left:9px;top:633px;width:1266px;height:329px;background:#fff;border:1px solid #3a4a60;border-bottom:none"></div>
<div style="position:absolute;left:10px;top:634px;width:1264px;height:20px;background:linear-gradient(#f5f7fb 0%,#f0f3f9 30%,#e0e6f2 38%,#dfe5f1 100%)"></div>
<div style="position:absolute;left:10px;top:654px;width:1264px;height:1px;background:#b8c0cc"></div>
<div class="t" style="left:18px;top:638px;font-size:12px;letter-spacing:0;line-height:15px"><u>F</u>ile</div>
<div class="t" style="left:50px;top:638px;font-size:12px;letter-spacing:0;line-height:15px"><u>E</u>dit</div>
<div class="t" style="left:84px;top:638px;font-size:12px;letter-spacing:0;line-height:15px"><u>V</u>iew</div>
<div class="t" style="left:123px;top:638px;font-size:12px;letter-spacing:0;line-height:15px"><u>G</u>o</div>
<div class="t" style="left:152px;top:638px;font-size:12px;letter-spacing:0;line-height:15px"><u>C</u>apture</div>
<div class="t" style="left:208px;top:638px;font-size:12px;letter-spacing:0;line-height:15px"><u>A</u>nalyze</div>
<div class="t" style="left:263px;top:638px;font-size:12px;letter-spacing:0;line-height:15px"><u>S</u>tatistics</div>
<div class="t" style="left:323px;top:638px;font-size:12px;letter-spacing:0;line-height:15px">Telephon<u>y</u></div>
<div class="t" style="left:393px;top:638px;font-size:12px;letter-spacing:0;line-height:15px"><u>T</u>ools</div>
<div class="t" style="left:435px;top:638px;font-size:12px;letter-spacing:0;line-height:15px"><u>I</u>nternals</div>
<div class="t" style="left:495px;top:638px;font-size:12px;letter-spacing:0;line-height:15px"><u>H</u>elp</div>
<div style="position:absolute;left:10px;top:655px;width:1264px;height:30px;background:linear-gradient(#fafbfd 0%,#f0f3f9 30%,#dfe5f1 36%,#dee4f0 100%)"></div>
<div style="position:absolute;left:10px;top:685px;width:1264px;height:1px;background:#b8c0cc"></div>
<svg style="position:absolute;left:17px;top:663px" width="16" height="16" viewBox="0 0 16 16"><circle cx="8" cy="8" r="7.5" fill="#fff" stroke="#999" stroke-width="0.8"/><circle cx="8" cy="8" r="6" fill="#444"/><path d="M4 5 H12 M4 8 H12 M4 11 H12" stroke="#eee" stroke-width="1.4"/><path d="M4 5 H5.5 M4 8 H5.5 M4 11 H5.5" stroke="#888" stroke-width="1.4"/></svg>
<svg style="position:absolute;left:43px;top:663px" width="16" height="16" viewBox="0 0 16 16"><g opacity="0.6"><circle cx="8" cy="8" r="7" fill="none" stroke="#333" stroke-width="1.6" stroke-dasharray="1 1"/><circle cx="8" cy="8" r="4.2" fill="none" stroke="#333" stroke-width="1.4" stroke-dasharray="1 1"/><circle cx="8" cy="8" r="1.6" fill="#222"/></g></svg>
<svg style="position:absolute;left:69px;top:663px" width="16" height="16" viewBox="0 0 16 16"><path d="M1 15 Q5 5 15 1 Q12 8 13 15 Z" fill="#4a8a4a" opacity="0.6"/></svg>
<svg style="position:absolute;left:95px;top:663px" width="16" height="16" viewBox="0 0 16 16"><rect x="1" y="1" width="14" height="14" fill="#f0b0b0"/><rect x="2" y="2" width="12" height="12" fill="#e00000"/></svg>
<svg style="position:absolute;left:121px;top:663px" width="16" height="16" viewBox="0 0 16 16"><path d="M1 15 Q4 4 15 1 Q12 8 14 15 Z" fill="#3cc03c" stroke="#2a8a2a" stroke-width="0.8"/><path d="M6 9 A3 3 0 1 0 10 7" fill="none" stroke="#dfffdf" stroke-width="1.3"/></svg>
<div style="position:absolute;left:147px;top:662px;width:1px;height:18px;background:#a8b0bc"></div>
<svg style="position:absolute;left:159px;top:663px" width="16" height="16" viewBox="0 0 16 16"><g opacity="0.55"><path d="M1 3 H6 L7 4 H15 V15 H1 Z" fill="#9a9a70" stroke="#555"/><path d="M2 8 H14" stroke="#ddd"/></g></svg>
<svg style="position:absolute;left:186px;top:663px" width="14" height="16" viewBox="0 0 14 16"><g opacity="0.55"><path d="M1 1 H9 L13 5 V15 H1 Z" fill="#bdbda0" stroke="#666"/></g></svg>
<svg style="position:absolute;left:212px;top:663px" width="16" height="16" viewBox="0 0 16 16"><g opacity="0.7"><path d="M2 2 L14 14 M14 2 L2 14" stroke="#444" stroke-width="3.6"/></g></svg>
<svg style="position:absolute;left:237px;top:663px" width="16" height="16" viewBox="0 0 16 16"><g opacity="0.6"><path d="M2 7 A6 5 0 0 1 13 4" fill="none" stroke="#445" stroke-width="3"/><path d="M14 9 A6 5 0 0 1 3 12" fill="none" stroke="#445" stroke-width="3"/><path d="M11 1 L16 2 L14 7 Z M5 15 L0 14 L2 9 Z" fill="#445"/></g></svg>
<div style="position:absolute;left:263px;top:662px;width:1px;height:18px;background:#a8b0bc"></div>
<svg style="position:absolute;left:275px;top:663px" width="16" height="16" viewBox="0 0 16 16"><circle cx="6.5" cy="6.5" r="5" fill="#fafafa" stroke="#777" stroke-width="1.5"/><path d="M10 10 L15 15" stroke="#555" stroke-width="2.5"/></svg>
<svg style="position:absolute;left:301px;top:663px" width="16" height="16" viewBox="0 0 16 16"><path d="M1 8 L7 2 V5 H14 V11 H7 V14 Z" fill="#8aa870" stroke="#5a6a50" stroke-width="0.8" opacity="0.75"/></svg>
<svg style="position:absolute;left:327px;top:663px" width="16" height="16" viewBox="0 0 16 16"><path d="M15 8 L9 2 V5 H2 V11 H9 V14 Z" fill="#8aa870" stroke="#5a6a50" stroke-width="0.8" opacity="0.75"/></svg>
<svg style="position:absolute;left:353px;top:663px" width="16" height="16" viewBox="0 0 16 16"><circle cx="10" cy="8.5" r="6" fill="#e8e030" stroke="#a09a20"/><path d="M1 6 H6 V2.5 L11 8.5 L6 14 V11 H1 Z" fill="#6ad04a" stroke="#3a8a2a" stroke-width="1"/></svg>
<svg style="position:absolute;left:378px;top:663px" width="16" height="16" viewBox="0 0 16 16"><rect x="1" y="1" width="14" height="3" fill="#7ad84a" stroke="#3a9a2a" stroke-width="0.8"/><path d="M8 4 L14 10 H10.5 V15 H5.5 V10 H2 Z" fill="#7ad84a" stroke="#3a9a2a" stroke-width="0.8"/></svg>
<svg style="position:absolute;left:405px;top:663px" width="16" height="16" viewBox="0 0 16 16"><rect x="1" y="12" width="14" height="3" fill="#7ad84a" stroke="#3a9a2a" stroke-width="0.8"/><path d="M8 12 L14 6 H10.5 V1 H5.5 V6 H2 Z" fill="#7ad84a" stroke="#3a9a2a" stroke-width="0.8"/></svg>
<div style="position:absolute;left:432px;top:662px;width:1px;height:18px;background:#a8b0bc"></div>
<div style="position:absolute;left:438px;top:659px;width:25px;height:23px;background:linear-gradient(#d4dae4,#c4cad6);border:1px solid #555e6a;border-radius:3px"></div>
<div style="position:absolute;left:464px;top:659px;width:25px;height:23px;background:linear-gradient(#d4dae4,#c4cad6);border:1px solid #555e6a;border-radius:3px"></div>
<svg style="position:absolute;left:443px;top:663px" width="16" height="16" viewBox="0 0 16 16"><rect x="0.5" y="0.5" width="15" height="14" fill="#fff" stroke="#444"/><path d="M2.5 4 H13.5" stroke="#a0d8a0" stroke-width="1.5"/><path d="M2.5 7 H13.5" stroke="#9090d0" stroke-width="1.5"/><path d="M2.5 10 H13.5" stroke="#e090e0" stroke-width="1.5"/><path d="M2.5 12.5 H13.5" stroke="#888" stroke-width="1"/></svg>
<svg style="position:absolute;left:469px;top:663px" width="16" height="16" viewBox="0 0 16 16"><rect x="0.5" y="0.5" width="15" height="14" fill="#eee" stroke="#444"/><path d="M2.5 4 H13.5 M2.5 7 H13.5 M2.5 10 H13.5" stroke="#b8b8b8" stroke-width="1.5"/><path d="M10 8 L15 8 L12.5 11Z M10 11 L15 11 L12.5 14Z" fill="#222"/></svg>
<div style="position:absolute;left:495px;top:662px;width:1px;height:18px;background:#a8b0bc"></div>
<svg style="position:absolute;left:507px;top:663px" width="16" height="16" viewBox="0 0 16 16"><circle cx="6.5" cy="6.5" r="5.5" fill="#f8f8f8" stroke="#333" stroke-width="1.2"/><path d="M3.5 6.5 H9.5 M6.5 3.5 V9.5" stroke="#222" stroke-width="1.3"/><path d="M10.5 10.5 L15 15" stroke="#222" stroke-width="2.4"/></svg>
<svg style="position:absolute;left:533px;top:663px" width="16" height="16" viewBox="0 0 16 16"><circle cx="6.5" cy="6.5" r="5.5" fill="#f8f8f8" stroke="#333" stroke-width="1.2"/><path d="M3.5 6.5 H9.5" stroke="#222" stroke-width="1.3"/><path d="M10.5 10.5 L15 15" stroke="#222" stroke-width="2.4"/></svg>
<svg style="position:absolute;left:559px;top:663px" width="16" height="16" viewBox="0 0 16 16"><circle cx="6.5" cy="6.5" r="5.5" fill="#f8f8f8" stroke="#333" stroke-width="1.2"/><text x="6.5" y="9" font-size="6.5" text-anchor="middle" font-family="Liberation Sans" font-weight="bold" fill="#222">1:1</text><path d="M10.5 10.5 L15 15" stroke="#222" stroke-width="2.4"/></svg>
<svg style="position:absolute;left:585px;top:663px" width="16" height="16" viewBox="0 0 16 16"><rect x="0.5" y="0.5" width="15" height="15" fill="#f4f4f4" stroke="#555"/><rect x="1" y="1" width="14" height="3" fill="#c8c8c8"/><path d="M3 6 H6 M4.5 4.5 V7.5 M10 6 H13 M11.5 4.5 V7.5" stroke="#333" stroke-width="0.9"/></svg>
<div style="position:absolute;left:612px;top:662px;width:1px;height:18px;background:#a8b0bc"></div>
<svg style="position:absolute;left:623px;top:663px" width="16" height="16" viewBox="0 0 16 16"><rect x="1" y="3" width="14" height="12" fill="#3a4a3a" stroke="#222"/><path d="M2 1 H14 L9 7 V12 H7 V7 Z" fill="#e8e8e8" stroke="#666" stroke-width="0.6"/><path d="M2 13 H12" stroke="#6a9a4a" stroke-width="1.5"/></svg>
<svg style="position:absolute;left:649px;top:663px" width="16" height="16" viewBox="0 0 16 16"><rect x="0.5" y="0.5" width="15" height="14" fill="#f0f0f0" stroke="#222"/><path d="M2 2 H14 L9 8 V12 H7 V8 Z" fill="#d8d8d8" stroke="#333" stroke-width="0.8"/></svg>
<svg style="position:absolute;left:675px;top:663px" width="16" height="16" viewBox="0 0 16 16"><rect x="0.5" y="0.5" width="6.5" height="6.5" fill="#d00000"/><rect x="7" y="0.5" width="8" height="6.5" fill="#d8e4f4" stroke="#4a7ac0" stroke-width="0.8"/><rect x="0.5" y="7" width="6.5" height="8" fill="#f0d020"/><path d="M8 6 V12 Q8 15 11 15 H13 Q15 15 15 12 V9 H9" fill="#fce0a0" stroke="#c08020" stroke-width="0.9"/></svg>
<svg style="position:absolute;left:701px;top:663px" width="16" height="16" viewBox="0 0 16 16"><path d="M3 14 L13 3" stroke="#3a7ad0" stroke-width="2.5"/><path d="M3 3 L13 14" stroke="#8a9aa8" stroke-width="2"/><circle cx="3" cy="3" r="2.2" fill="none" stroke="#8a9aa8" stroke-width="1.3"/><circle cx="13" cy="13" r="2.2" fill="none" stroke="#8a9aa8" stroke-width="1.3"/></svg>
<div style="position:absolute;left:727px;top:662px;width:1px;height:18px;background:#a8b0bc"></div>
<svg style="position:absolute;left:739px;top:663px" width="16" height="16" viewBox="0 0 16 16"><circle cx="8" cy="8" r="6.5" fill="#f4f4f4" stroke="#d04030" stroke-width="1.5"/><circle cx="8" cy="8" r="3" fill="#dde" stroke="#888" stroke-width="1"/><path d="M3 3 L5.5 5.5 M13 3 L10.5 5.5 M3 13 L5.5 10.5 M13 13 L10.5 10.5" stroke="#d04030" stroke-width="2.2"/><circle cx="8" cy="8" r="7.3" fill="none" stroke="#a08070" stroke-width="0.6"/></svg>
<div style="position:absolute;left:10px;top:686px;width:1264px;height:30px;background:linear-gradient(#fafbfd 0%,#f0f3f9 34%,#dfe5f1 40%,#dee4f0 100%)"></div>
<div style="position:absolute;left:10px;top:716px;width:1264px;height:1px;background:#a8b0bc"></div>
<div class="t" style="left:34px;top:696px;font-size:12px;letter-spacing:0;line-height:15px">Filter:</div>
<div style="position:absolute;left:86px;top:690px;width:400px;height:24px;background:#fff;border:1px solid #8a96a8"></div>
<div style="position:absolute;left:468px;top:691px;width:17px;height:22px;background:linear-gradient(#f4f4f4,#d8d8d8);border-left:1px solid #9aa"></div>
<svg style="position:absolute;left:472px;top:699px" width="9" height="6" viewBox="0 0 9 6"><path d="M0 0 L9 0 L4.5 5.5Z" fill="#000"/></svg>
<div class="t" style="left:491px;top:696px;font-size:12px;letter-spacing:0;line-height:15px;color:#000">Expression...</div>
<div class="t" style="left:583px;top:696px;font-size:12px;letter-spacing:0;line-height:15px;color:#9a9a9a">Clear</div>
<div class="t" style="left:654px;top:696px;font-size:12px;letter-spacing:0;line-height:15px;color:#9a9a9a">Apply</div>
<div class="t" style="left:732px;top:696px;font-size:12px;letter-spacing:0;line-height:15px;color:#9a9a9a">Save</div>
<div class="t" style="left:808px;top:696px;font-size:12px;letter-spacing:0;line-height:15px;color:#000">TAF</div>
<div class="t" style="left:879px;top:696px;font-size:12px;letter-spacing:0;line-height:15px;color:#000">Zwin</div>
<div class="t" style="left:955px;top:696px;font-size:12px;letter-spacing:0;line-height:15px;color:#000">SYN</div>
<div style="position:absolute;left:10px;top:717px;width:1264px;height:18px;background:linear-gradient(#ffffff,#f4f5f8)"></div>
<div style="position:absolute;left:10px;top:734px;width:1264px;height:1px;background:#e4e6ea"></div>
<div class="t" style="left:11px;top:721px;font-size:12px;letter-spacing:-0.1px;line-height:15px">No.</div>
<div class="t" style="left:51px;top:721px;font-size:12px;letter-spacing:-0.1px;line-height:15px">Time</div>
<div class="t" style="left:123px;top:721px;font-size:12px;letter-spacing:-0.1px;line-height:15px">TCP Delta</div>
<div class="t" style="left:209px;top:721px;font-size:12px;letter-spacing:-0.1px;line-height:15px">Source</div>
<div class="t" style="left:316px;top:721px;font-size:12px;letter-spacing:-0.1px;line-height:15px">Destination</div>
<div class="t" style="left:437px;top:721px;font-size:12px;letter-spacing:-0.1px;line-height:15px">Protocol</div>
<div class="t" style="left:493px;top:721px;font-size:12px;letter-spacing:-0.1px;line-height:15px">Length</div>
<div class="t" style="left:541px;top:721px;font-size:12px;letter-spacing:-0.1px;line-height:15px">Str.</div>
<div class="t" style="left:581px;top:721px;font-size:12px;letter-spacing:-0.1px;line-height:15px">BIF</div>
<div class="t" style="left:621px;top:721px;font-size:12px;letter-spacing:-0.1px;line-height:15px">Flags</div>
<div class="t" style="left:672px;top:721px;font-size:12px;letter-spacing:-0.1px;line-height:15px">Service Time</div>
<div class="t" style="left:757px;top:721px;font-size:12px;letter-spacing:-0.1px;line-height:15px">APDU Rsp</div>
<div class="t" style="left:827px;top:721px;font-size:12px;letter-spacing:-0.1px;line-height:15px">Rsp Spread</div>
<div class="t" style="left:902px;top:721px;font-size:12px;letter-spacing:-0.1px;line-height:15px">Identification</div>
<div class="t" style="left:1009px;top:721px;font-size:12px;letter-spacing:-0.1px;line-height:15px">Info</div>
<div style="position:absolute;left:49px;top:718px;width:1px;height:16px;background:#e2e4e8"></div>
<div style="position:absolute;left:121px;top:718px;width:1px;height:16px;background:#e2e4e8"></div>
<div style="position:absolute;left:207px;top:718px;width:1px;height:16px;background:#e2e4e8"></div>
<div style="position:absolute;left:313px;top:718px;width:1px;height:16px;background:#e2e4e8"></div>
<div style="position:absolute;left:435px;top:718px;width:1px;height:16px;background:#e2e4e8"></div>
<div style="position:absolute;left:490px;top:718px;width:1px;height:16px;background:#e2e4e8"></div>
<div style="position:absolute;left:539px;top:718px;width:1px;height:16px;background:#e2e4e8"></div>
<div style="position:absolute;left:579px;top:718px;width:1px;height:16px;background:#e2e4e8"></div>
<div style="position:absolute;left:619px;top:718px;width:1px;height:16px;background:#e2e4e8"></div>
<div style="position:absolute;left:669px;top:718px;width:1px;height:16px;background:#e2e4e8"></div>
<div style="position:absolute;left:754px;top:718px;width:1px;height:16px;background:#e2e4e8"></div>
<div style="position:absolute;left:824px;top:718px;width:1px;height:16px;background:#e2e4e8"></div>
<div style="position:absolute;left:899px;top:718px;width:1px;height:16px;background:#e2e4e8"></div>
<div style="position:absolute;left:1006px;top:718px;width:1px;height:16px;background:#e2e4e8"></div>
<div style="position:absolute;left:10px;top:736px;width:1264px;height:16px;background:#3399ff"></div>
<div style="position:absolute;left:10px;top:752px;width:1264px;height:16px;background:#fdf0d8"></div>
<div class="t" style="left:13px;top:736px;font-family:'Liberation Mono',monospace;font-size:12.5px;letter-spacing:-0.5px;line-height:15px;-webkit-text-stroke:0.25px currentColor;color:#c8f4ff">1</div>
<div class="t" style="left:53px;top:736px;font-family:'Liberation Mono',monospace;font-size:12.5px;letter-spacing:-0.5px;line-height:15px;-webkit-text-stroke:0.25px currentColor;color:#c8f4ff">0.000000</div>
<div class="t" style="left:211px;top:736px;font-family:'Liberation Mono',monospace;font-size:12.5px;letter-spacing:-0.5px;line-height:15px;-webkit-text-stroke:0.25px currentColor;color:#c8f4ff">0.0.0.0</div>
<div class="t" style="left:318px;top:736px;font-family:'Liberation Mono',monospace;font-size:12.5px;letter-spacing:-0.5px;line-height:15px;-webkit-text-stroke:0.25px currentColor;color:#c8f4ff">255.255.255.255</div>
<div class="t" style="left:450px;top:736px;font-family:'Liberation Mono',monospace;font-size:12.5px;letter-spacing:-0.5px;line-height:15px;-webkit-text-stroke:0.25px currentColor;color:#c8f4ff">MNDP</div>
<div class="t" style="left:505px;top:736px;font-family:'Liberation Mono',monospace;font-size:12.5px;letter-spacing:-0.5px;line-height:15px;-webkit-text-stroke:0.25px currentColor;color:#c8f4ff">169</div>
<div class="t" style="left:920px;top:736px;font-family:'Liberation Mono',monospace;font-size:12.5px;letter-spacing:-0.5px;line-height:15px;-webkit-text-stroke:0.25px currentColor;color:#c8f4ff">0x0000 (0)</div>
<div class="t" style="left:1012px;top:736px;font-family:'Liberation Mono',monospace;font-size:12.5px;letter-spacing:-0.5px;line-height:15px;-webkit-text-stroke:0.25px currentColor;color:#c8f4ff">Source port: 5678&nbsp; Destination port: 5</div>
<div class="t" style="left:13px;top:752px;font-family:'Liberation Mono',monospace;font-size:12.5px;letter-spacing:-0.5px;line-height:15px;-webkit-text-stroke:0.25px currentColor;color:#202020">2</div>
<div class="t" style="left:53px;top:752px;font-family:'Liberation Mono',monospace;font-size:12.5px;letter-spacing:-0.5px;line-height:15px;-webkit-text-stroke:0.25px currentColor;color:#202020">0.000235</div>
<div class="t" style="left:211px;top:752px;font-family:'Liberation Mono',monospace;font-size:12.5px;letter-spacing:-0.5px;line-height:15px;-webkit-text-stroke:0.25px currentColor;color:#202020">Routerbo_7d:e8:</div>
<div class="t" style="left:318px;top:752px;font-family:'Liberation Mono',monospace;font-size:12.5px;letter-spacing:-0.5px;line-height:15px;-webkit-text-stroke:0.25px currentColor;color:#202020">CDP/VTP/DTP/PAgP/</div>
<div class="t" style="left:453px;top:752px;font-family:'Liberation Mono',monospace;font-size:12.5px;letter-spacing:-0.5px;line-height:15px;-webkit-text-stroke:0.25px currentColor;color:#202020">CDP</div>
<div class="t" style="left:509px;top:752px;font-family:'Liberation Mono',monospace;font-size:12.5px;letter-spacing:-0.5px;line-height:15px;-webkit-text-stroke:0.25px currentColor;color:#202020">92</div>
<div class="t" style="left:1012px;top:752px;font-family:'Liberation Mono',monospace;font-size:12.5px;letter-spacing:-0.5px;line-height:15px;-webkit-text-stroke:0.25px currentColor;color:#202020">Device ID:</div>
<div class="t" style="left:1172px;top:752px;font-family:'Liberation Mono',monospace;font-size:12.5px;letter-spacing:-0.5px;line-height:15px;-webkit-text-stroke:0.25px currentColor;color:#202020">Port ID: ether5</div>
<div style="position:absolute;left:1090px;top:754px;width:70px;height:12px;background:#fbf4ea;border-radius:6px"></div>
<div style="position:absolute;left:1273px;top:736px;width:2px;height:32px;background:#fff"></div>
<div style="position:absolute;left:10px;top:937px;width:1264px;height:17px;background:#eaeaea;border-top:1px solid #e0e0e0"></div>
<div style="position:absolute;left:28px;top:938px;width:938px;height:15px;background:linear-gradient(#f4f4f4 0%,#e8e8e8 45%,#d4d4d4 50%,#dcdcdc 100%);border:1px solid #8a8a8a;border-radius:2px"></div>
<svg style="position:absolute;left:15px;top:941px" width="6" height="8" viewBox="0 0 6 8"><path d="M5 0 L0 4 L5 8Z" fill="#606060"/></svg>
<svg style="position:absolute;left:1262px;top:941px" width="6" height="8" viewBox="0 0 6 8"><path d="M0 0 L5 4 L0 8Z" fill="#404040"/></svg>
<div style="position:absolute;left:492px;top:941px;width:1px;height:7px;background:#404040"></div>
<div style="position:absolute;left:495px;top:941px;width:1px;height:7px;background:#404040"></div>
<div style="position:absolute;left:498px;top:941px;width:1px;height:7px;background:#404040"></div>
<div style="position:absolute;left:10px;top:954px;width:1264px;height:8px;background:#f0f0f0"></div>
<div style="position:absolute;left:50px;top:960px;width:410px;height:2px;background:#fff;border:1px solid #a0a0a0;border-bottom:none"></div>
<div style="position:absolute;left:465px;top:960px;width:678px;height:2px;background:#fff;border:1px solid #a0a0a0;border-bottom:none"></div>
<div style="position:absolute;left:1149px;top:960px;width:124px;height:2px;background:#fff;border:1px solid #a0a0a0;border-bottom:none"></div>
<div style="position:absolute;left:0px;top:604px;width:1px;height:358px;background:#000"></div>
<div style="position:absolute;left:2px;top:610px;width:1px;height:352px;background:#2a3040"></div>
<div style="position:absolute;left:3px;top:610px;width:1px;height:352px;background:#e8eef8"></div>
<div style="position:absolute;left:4px;top:605px;width:5px;height:114px;background:linear-gradient(#b8c4dc,#8e94c0 30%,#c8cce0 85%,#dde0ec)"></div>
<div style="position:absolute;left:4px;top:719px;width:5px;height:243px;background:linear-gradient(#5d6b9d,#4a5894 60%,#34428a)"></div>
<div style="position:absolute;left:1275px;top:633px;width:6px;height:329px;background:linear-gradient(#b8c4d2,#b4c0d0 30%,#c8d0dc 100%)"></div>
<div style="position:absolute;left:1275px;top:633px;width:1px;height:329px;background:#e8eef8"></div>
<div style="position:absolute;left:1276px;top:719px;width:5px;height:243px;background:linear-gradient(#8a9ab8,#6a7aa8 60%,#4a5a98)"></div>
</body></html>
